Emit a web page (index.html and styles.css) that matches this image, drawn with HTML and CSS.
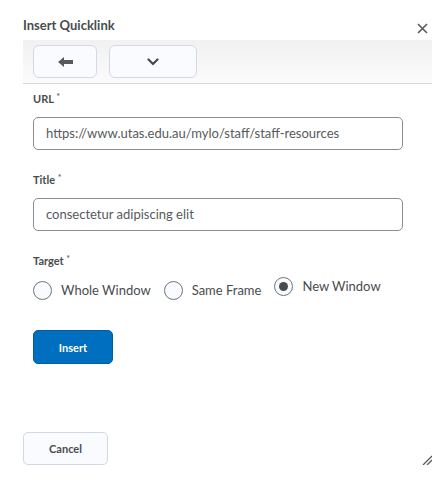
FILE: index.html
```html
<!DOCTYPE html>
<html>
<head>
<meta charset="utf-8">
<link rel="stylesheet" href="styles.css">
</head>
<body>
<div class="dialog">
  <div class="header">
    <h1 class="title">Insert Quicklink</h1>
    <span class="close"><svg width="11" height="11" viewBox="0 0 11 11"><path d="M1 1L10 10M10 1L1 10" stroke="#565a5c" stroke-width="1.6" fill="none"/></svg></span>
  </div>
  <div class="toolbar">
    <button class="tbtn back"><svg width="15" height="10" viewBox="0 0 15 10"><path d="M0 5L6 0V3H15V7H6V10Z" fill="#565a5c"/></svg></button>
    <button class="tbtn more"><svg width="12" height="8" viewBox="0 0 12 8"><path d="M1.5 1.5L6 6L10.5 1.5" stroke="#494c4e" stroke-width="2.2" fill="none" stroke-linecap="round" stroke-linejoin="round"/></svg></button>
  </div>
  <div class="form">
    <div class="field">
      <label class="label">URL <span class="req">*</span></label>
      <div class="input">https://www.utas.edu.au/mylo/staff/staff-resources</div>
    </div>
    <div class="field">
      <label class="label">Title <span class="req">*</span></label>
      <div class="input">consectetur adipiscing elit</div>
    </div>
    <div class="field">
      <label class="label">Target <span class="req">*</span></label>
      <div class="radios">
        <span class="radio"><span class="circle"></span>Whole Window</span>
        <span class="radio"><span class="circle"></span>Same Frame</span>
        <span class="radio checked"><span class="circle"></span>New Window</span>
      </div>
    </div>
    <button class="primary">Insert</button>
  </div>
  <div class="footer">
    <button class="secondary">Cancel</button>
    <span class="grip"><svg width="10" height="10" viewBox="0 0 10 10"><path d="M1 10L10 1M5 10L10 5" stroke="#565a5c" stroke-width="1.3"/></svg></span>
  </div>
</div>
</body>
</html>
```
FILE: styles.css
```css
html, body {
  margin: 0;
  padding: 0;
  background: #fff;
}
body {
  font-family: Lato, "Open Sans", sans-serif;
  color: #494c4e;
}
.dialog {
  width: 445px;
  height: 487px;
  box-sizing: border-box;
  padding: 0 13px 0 23px;
  display: flex;
  flex-direction: column;
}
.header {
  display: flex;
  justify-content: space-between;
  align-items: flex-start;
  height: 40px;
}
.title {
  margin: 17px 0 0 0;
  font-size: 13px;
  font-weight: 700;
  line-height: 16px;
  color: #494c4e;
}
.close {
  margin-top: 23px;
  margin-right: 4px;
  display: flex;
}
.toolbar {
  width: 409px;
  height: 44px;
  box-sizing: border-box;
  background: linear-gradient(#f1f1f1, #fbfbfb);
  border-bottom: 1px solid #d8d8d8;
  padding: 5px 0 0 10px;
  display: flex;
  gap: 12px;
}
.tbtn {
  height: 33px;
  box-sizing: border-box;
  border: 1px solid #d3d9e3;
  border-radius: 6px;
  background: #f9fbff;
  display: flex;
  align-items: center;
  justify-content: center;
  padding: 0;
}
.back { width: 64px; }
.more { width: 88px; }
.form {
  padding-left: 10px;
  display: flex;
  flex-direction: column;
}
.field {
  display: flex;
  flex-direction: column;
}
.label {
  font-size: 11px;
  font-weight: 700;
  line-height: 14px;
  margin-top: 8px;
  color: #494c4e;
}
.field + .field .label { margin-top: 23px; }
.req {
  font-size: 9px;
  vertical-align: top;
  font-weight: 400;
  position: relative;
  top: -2px;
}
.input {
  margin-top: 11px;
  width: 370px;
  height: 33px;
  box-sizing: border-box;
  border: 1px solid #898d8f;
  border-radius: 5px;
  padding: 0 12px;
  font-size: 13px;
  line-height: 31px;
  color: #565a5c;
}
.radios {
  display: flex;
  align-items: flex-start;
  gap: 13px;
  margin-top: 13px;
  height: 22px;
}
.radio {
  display: flex;
  align-items: center;
  gap: 9px;
  font-size: 13px;
  line-height: 19px;
  color: #494c4e;
}
.radio.checked { margin-top: -4px; }
.circle {
  width: 19px;
  height: 19px;
  box-sizing: border-box;
  border: 1px solid #6e7477;
  border-radius: 50%;
  background: #f9fbff;
  display: flex;
  align-items: center;
  justify-content: center;
}
.checked .circle::after {
  content: "";
  width: 9px;
  height: 9px;
  border-radius: 50%;
  background: #494c4e;
}
.primary {
  margin-top: 27px;
  width: 80px;
  height: 34px;
  border: 1px solid #005da0;
  border-radius: 5px;
  background: #006fbf;
  color: #fff;
  font-family: Lato, "Open Sans", sans-serif;
  font-weight: 700;
  font-size: 11px;
  padding: 0;
}
.footer {
  margin-top: 68px;
  display: flex;
  justify-content: space-between;
  align-items: flex-end;
}
.secondary {
  width: 85px;
  height: 33px;
  border: 1px solid #d3d9e3;
  border-radius: 5px;
  background: #f9fbff;
  color: #494c4e;
  font-family: Lato, "Open Sans", sans-serif;
  font-weight: 700;
  font-size: 11px;
  padding: 0;
}
.grip {
  display: flex;
}
```
